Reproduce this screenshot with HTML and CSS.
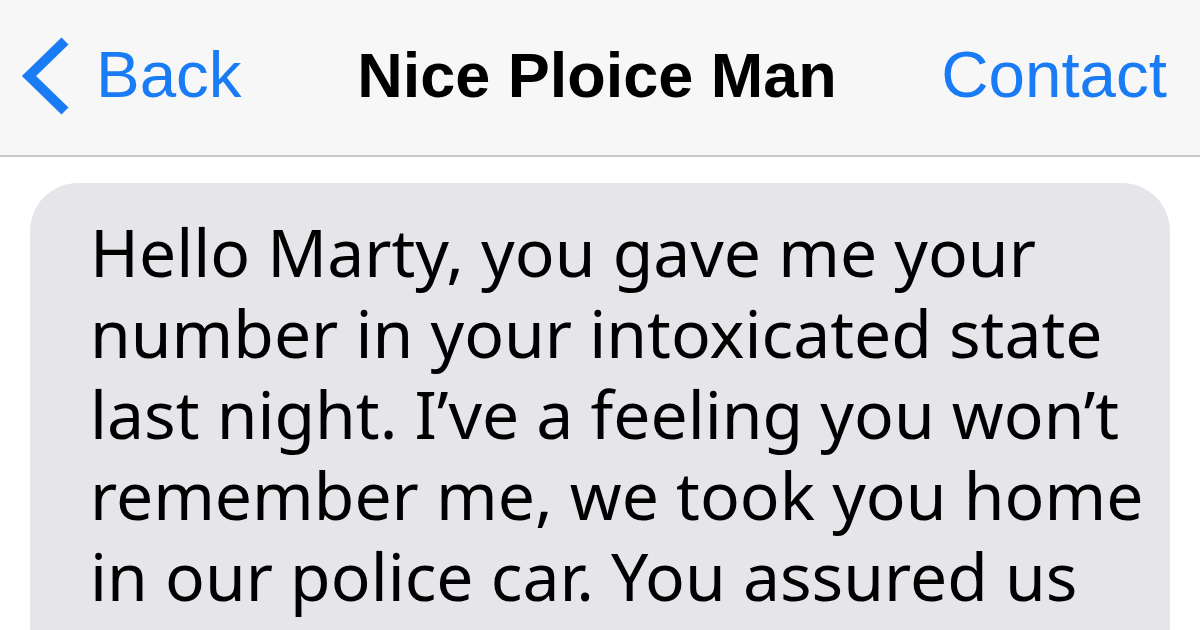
FILE: index.html
```html
<!DOCTYPE html>
<html lang="en">
<head>
<meta charset="utf-8">
<title>Nice Ploice Man</title>
<link rel="stylesheet" href="styles.css">
</head>
<body>
<header class="navbar">
  <a class="nav-back">
    <svg class="chevron" width="50" height="80" viewBox="0 0 50 80" aria-hidden="true">
      <polyline points="44,5 8,40 44,75" fill="none" stroke="#1a7cf5" stroke-width="10" stroke-linejoin="miter"/>
    </svg>
    <span class="nav-back-label">Back</span>
  </a>
  <h1 class="nav-title">Nice Ploice Man</h1>
  <a class="nav-contact">Contact</a>
</header>
<main class="thread">
  <div class="bubble">
    <span class="line">Hello Marty, you gave me your</span>
    <span class="line">number in your intoxicated state</span>
    <span class="line">last night. I’ve a feeling you won’t</span>
    <span class="line">remember me, we took you home</span>
    <span class="line">in our police car. You assured us</span>
  </div>
</main>
</body>
</html>
```

FILE: styles.css
```css
*, *::before, *::after {
  box-sizing: border-box;
}

html, body {
  margin: 0;
  padding: 0;
  background: #ffffff;
  overflow: hidden;
  height: 630px;
}

.navbar {
  display: grid;
  grid-template-columns: 1fr auto 1fr;
  align-items: center;
  height: 157px;
  background: #f7f7f7;
  border-bottom: 2px solid #c8c8ca;
  font-family: "Liberation Sans", Arial, sans-serif;
  font-size: 65.5px;
  padding: 0 33px 6px 21px;
}

.nav-back {
  display: flex;
  align-items: center;
  gap: 25px;
  color: #1a7cf5;
  justify-self: start;
}

.chevron {
  display: block;
  margin-top: 2px;
}

.nav-title {
  margin: 0;
  font-size: 63px;
  font-weight: bold;
  color: #000;
  position: relative;
  left: 3px;
}

.nav-contact {
  color: #1a7cf5;
  justify-self: end;
}

.thread {
  padding: 26px 30px 0 30px;
}

.bubble {
  background: #e5e5ea;
  border-radius: 48px;
  padding: 28px 40px 80px 60px;
  font-family: "Noto Sans", "Open Sans", sans-serif;
  font-size: 66px;
  line-height: 81px;
  color: #000;
}

.line {
  display: block;
  white-space: nowrap;
}
```
